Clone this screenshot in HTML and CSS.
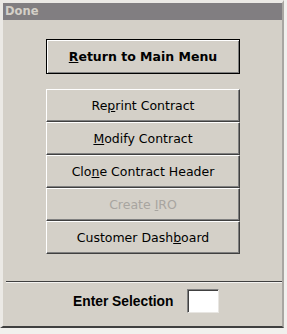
FILE: index.html
```html
<!DOCTYPE html>
<html lang="en">
<head>
    <meta charset="UTF-8">
    <title>Done</title>
    <link rel="stylesheet" href="styles.css">
</head>
<body>
    <div class="window">
        <div class="titlebar">Done</div>
        <div class="content">
            <div class="menu">
                <button class="btn-main"><u>R</u>eturn to Main Menu</button>
                <div class="group">
                    <button class="btn">Re<u>p</u>rint Contract</button>
                    <button class="btn"><u>M</u>odify Contract</button>
                    <button class="btn">Clo<u>n</u>e Contract Header</button>
                    <button class="btn" disabled>Create <u>I</u>RO</button>
                    <button class="btn">Customer Dash<u>b</u>oard</button>
                </div>
            </div>
            <div class="separator"></div>
            <div class="selection">
                <label for="sel" class="sel-label">Enter Selection</label>
                <input type="text" id="sel" class="sel-input">
            </div>
        </div>
    </div>
</body>
</html>
```

FILE: styles.css
```css
body {
    margin: 0;
    background-color: #f1f0ed;
}
.window {
    width: 279px;
    height: 323px;
    border-top: 3px solid #ebe9e5;
    border-left: 3px solid #ebe9e5;
    border-right: 2px solid #a9a6a1;
    border-bottom: 2px solid #404040;
    box-shadow: 0 1px 0 #8c8a86;
    display: flex;
    flex-direction: column;
}
.titlebar {
    height: 17px;
    line-height: 17px;
    padding-left: 2px;
    background-color: #817e81;
    color: #d4d0c8;
    font-family: "DejaVu Sans", sans-serif;
    font-weight: bold;
    font-size: 11.5px;
}
.content {
    flex: 1;
    background-color: #d4d0c8;
}
.menu {
    margin-left: 43px;
    padding-top: 19px;
    width: 194px;
}
button {
    display: block;
    width: 100%;
    background-color: #d4d0c8;
    color: #000;
    font-family: "DejaVu Sans", sans-serif;
    padding: 0;
    cursor: pointer;
}
.btn-main {
    height: 35px;
    border: 1px solid #000;
    box-shadow: inset 1px 1px 0 #fff, inset -1px -1px 0 #808080;
    font-weight: bold;
    font-size: 12.5px;
}
.group {
    margin-top: 15px;
}
.btn {
    height: 33px;
    border-top: 1px solid #fff;
    border-left: 1px solid #fff;
    border-right: 1px solid #404040;
    border-bottom: 1px solid #404040;
    box-shadow: inset -1px -1px 0 #808080;
    font-size: 12.5px;
}
.btn:disabled {
    color: #a8a5a0;
    cursor: default;
}
.separator {
    margin: 27px 0 0 3px;
    border-top: 1px solid #404040;
    border-bottom: 1px solid #f4f3f1;
}
.selection {
    display: flex;
    align-items: center;
    padding: 6px 0 0 70px;
}
.sel-label {
    width: 114px;
    font-family: "Liberation Sans", Arial, sans-serif;
    font-weight: bold;
    font-size: 13.8px;
}
.sel-input {
    box-sizing: border-box;
    width: 32px;
    height: 24px;
    margin: 0;
    padding: 0;
    background: #fff;
    border-top: 1px solid #808080;
    border-left: 1px solid #808080;
    border-right: 1px solid #e8e6e2;
    border-bottom: 1px solid #e8e6e2;
    box-shadow: inset 1px 1px 0 #404040;
}
```
